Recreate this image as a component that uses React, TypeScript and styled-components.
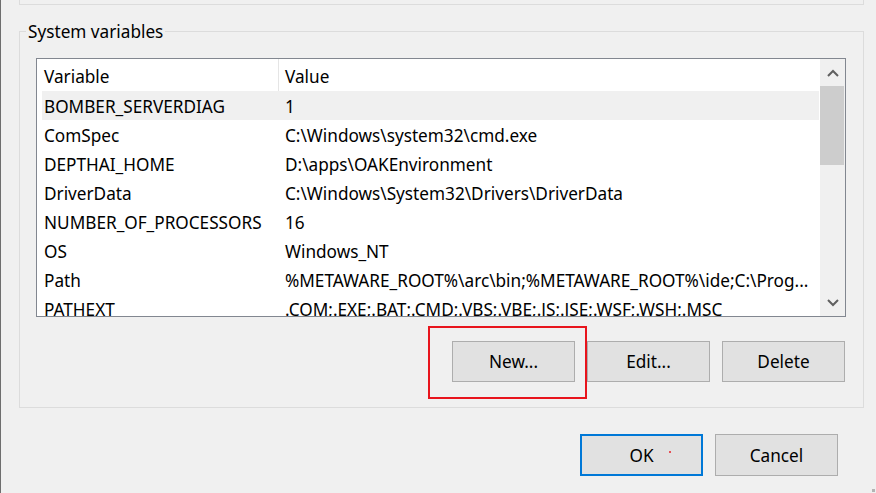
import React from "react";
import styled, { createGlobalStyle } from "styled-components";

const Global = createGlobalStyle`
  html, body { margin: 0; padding: 0; background: #f0f0f0; }
  body { font-family: "Noto Sans", "Open Sans", sans-serif; }
`;

const Window = styled.div`
  position: relative;
  width: 876px;
  height: 493px;
  box-sizing: border-box;
  border-left: 1px solid #6e6e6e;
  background: #f0f0f0;
  overflow: hidden;
  font-size: 17.2px;
  color: #000;
`;

const TopGroupTail = styled.div`
  height: 4px;
  margin: 0 12px 0 18px;
  border: 1px solid #dcdcdc;
  border-top: none;
`;

const Group = styled.div`
  position: relative;
  margin: 26px 12px 0 18px;
  border: 1px solid #dcdcdc;
  padding: 26px 17px 25px 16px;
`;

const Legend = styled.span`
  position: absolute;
  left: 6px;
  top: -11px;
  padding: 0 2px;
  line-height: 22px;
  background: #f0f0f0;
  white-space: nowrap;
`;

const ListView = styled.div`
  display: flex;
  height: 259px;
  box-sizing: border-box;
  border: 1px solid #828790;
  background: #fff;
`;

const ListContent = styled.div`
  flex: 1;
  overflow: hidden;
  margin-right: 1px;
`;

const Header = styled.div`
  display: grid;
  grid-template-columns: 241px 1fr;
  height: 32px;
`;

const HeaderCell = styled.div<{ $divider?: boolean }>`
  display: flex;
  align-items: center;
  padding-left: ${(p) => (p.$divider ? "6px" : "7px")};
  padding-top: 2px;
  border-left: ${(p) => (p.$divider ? "1px solid #e5e5e5" : "none")};
  white-space: nowrap;
`;

const Row = styled.div<{ $selected?: boolean }>`
  display: grid;
  grid-template-columns: 237px 1fr;
  height: 29px;
  margin-left: 5px;
  background: ${(p) => (p.$selected ? "#f0f0f0" : "transparent")};
`;

const Cell = styled.div<{ $value?: boolean }>`
  display: flex;
  align-items: center;
  padding-left: ${(p) => (p.$value ? "6px" : "2px")};
  padding-top: 2px;
  white-space: nowrap;
  overflow: hidden;
`;

const ScrollBar = styled.div`
  display: flex;
  flex-direction: column;
  width: 25px;
  background: #f0f0f0;
`;

const ScrollArrow = styled.div`
  display: flex;
  align-items: center;
  justify-content: center;
  height: 27px;
  color: #606060;
`;

const ScrollTrack = styled.div`
  flex: 1;
  padding: 0 1px 0 0;
`;

const ScrollThumb = styled.div`
  height: 79px;
  background: #cdcdcd;
`;

const ButtonRow = styled.div<{ $margin?: string }>`
  display: flex;
  justify-content: flex-end;
  gap: 12px;
  margin: ${(p) => p.$margin || "0"};
`;

const Button = styled.button<{ $primary?: boolean; $h?: number }>`
  position: relative;
  width: 123px;
  height: ${(p) => p.$h || 41}px;
  box-sizing: border-box;
  background: #e1e1e1;
  border: ${(p) => (p.$primary ? "2px solid #0078d7" : "1px solid #adadad")};
  font-family: inherit;
  font-size: 17.2px;
  color: #000;
  padding: 0;
`;

const Highlighted = styled.div`
  position: relative;
`;

const Annotation = styled.div`
  position: absolute;
  left: -24px;
  right: -12px;
  top: -15px;
  bottom: -17px;
  border: 2px solid #e8141c;
  pointer-events: none;
`;

const Dot = styled.span`
  position: absolute;
  left: 87px;
  top: 15px;
  width: 2px;
  height: 2px;
  background: #e8141c;
  opacity: 0.7;
`;

const Grip = styled.div`
  position: absolute;
  right: 1px;
  bottom: 1px;
  width: 3px;
  height: 3px;
  background: #b4b4b4;
`;

const Chevron = ({ up }: { up?: boolean }) => (
  <svg width="12" height="8" viewBox="0 0 12 8">
    <path
      d={up ? "M1 7 L6 2 L11 7" : "M1 1 L6 6 L11 1"}
      fill="none"
      stroke="#606060"
      strokeWidth="2"
    />
  </svg>
);

const rows: [string, string][] = [
  ["BOMBER_SERVERDIAG", "1"],
  ["ComSpec", "C:\\Windows\\system32\\cmd.exe"],
  ["DEPTHAI_HOME", "D:\\apps\\OAKEnvironment"],
  ["DriverData", "C:\\Windows\\System32\\Drivers\\DriverData"],
  ["NUMBER_OF_PROCESSORS", "16"],
  ["OS", "Windows_NT"],
  ["Path", "%METAWARE_ROOT%\\arc\\bin;%METAWARE_ROOT%\\ide;C:\\Prog..."],
  ["PATHEXT", ".COM;.EXE;.BAT;.CMD;.VBS;.VBE;.JS;.JSE;.WSF;.WSH;.MSC"],
];

export default function App() {
  return (
    <>
      <Global />
      <Window>
        <TopGroupTail />
        <Group>
          <Legend>System variables</Legend>
          <ListView>
            <ListContent>
              <Header>
                <HeaderCell>Variable</HeaderCell>
                <HeaderCell $divider>Value</HeaderCell>
              </Header>
              {rows.map(([k, v], i) => (
                <Row key={k} $selected={i === 0}>
                  <Cell>{k}</Cell>
                  <Cell $value>{v}</Cell>
                </Row>
              ))}
            </ListContent>
            <ScrollBar>
              <ScrollArrow>
                <Chevron up />
              </ScrollArrow>
              <ScrollTrack>
                <ScrollThumb />
              </ScrollTrack>
              <ScrollArrow>
                <Chevron />
              </ScrollArrow>
            </ScrollBar>
          </ListView>
          <ButtonRow $margin="24px 1px 0 0">
            <Highlighted>
              <Button>New...</Button>
              <Annotation />
            </Highlighted>
            <Button>Edit...</Button>
            <Button>Delete</Button>
          </ButtonRow>
        </Group>
        <ButtonRow $margin="26px 38px 0 0">
          <Button $primary $h={42}>
            OK
            <Dot />
          </Button>
          <Button $h={42}>Cancel</Button>
        </ButtonRow>
        <Grip />
      </Window>
    </>
  );
}
